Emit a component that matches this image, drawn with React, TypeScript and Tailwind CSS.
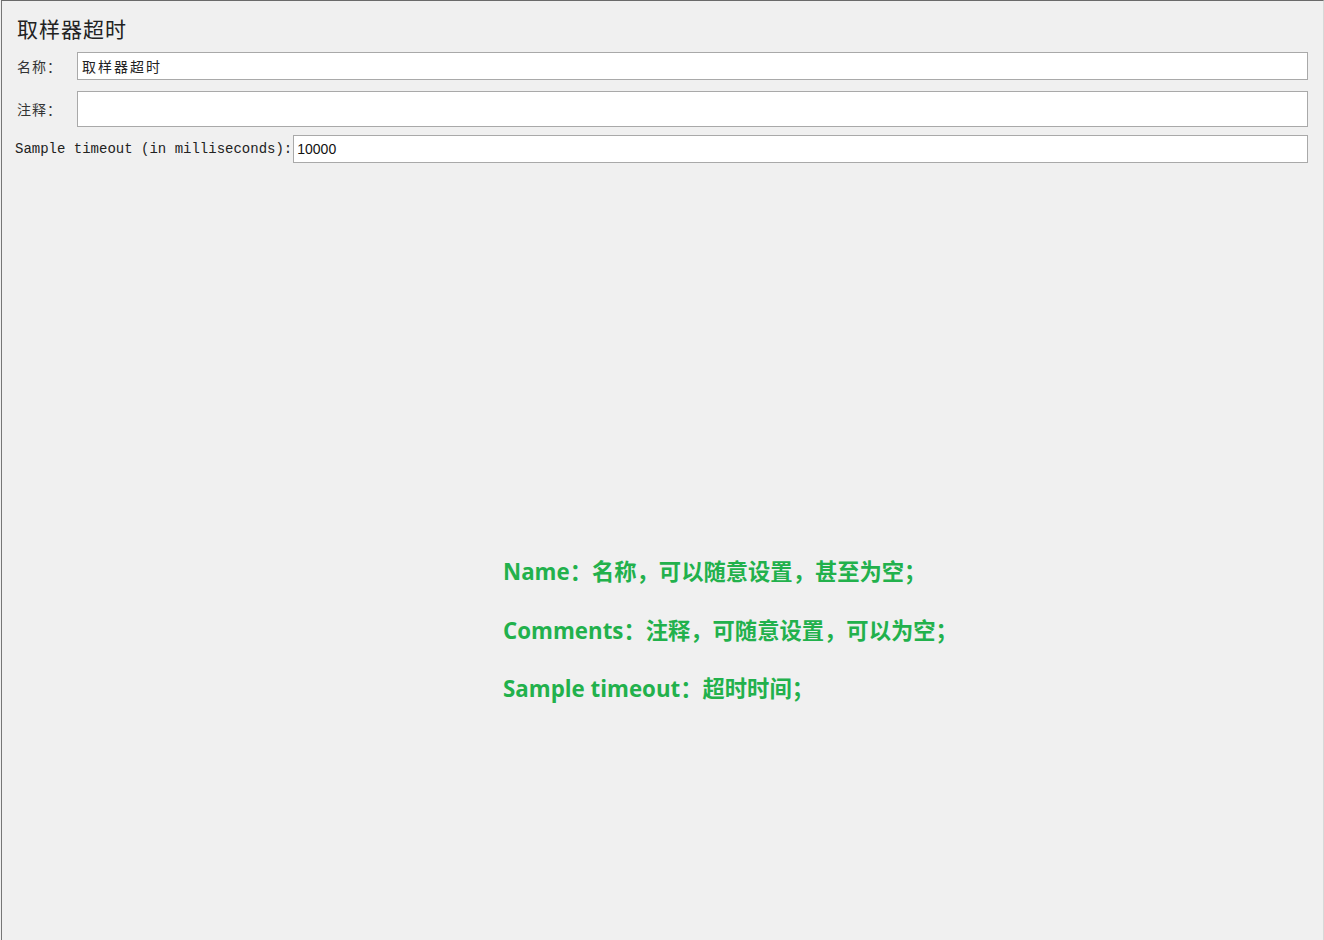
const cjk = { fontFamily: '"Noto Sans CJK SC", "Noto Sans", sans-serif' };

export default function App() {
  return (
    <div className="w-[1324px] h-[940px] bg-[#f0f0f0] pl-px overflow-hidden">
      <div className="h-full border-t border-l border-r border-t-[#6a6a6a] border-l-[#767676] border-r-[#d8d8d8] flex flex-col">
        <div className="pl-[15px] pr-[15px] pt-[15px]">
          <h1 className="text-[21px] leading-[24px] tracking-[1px] text-[#222]" style={cjk}>取样器超时</h1>

          <div className="flex items-center mt-[12px]">
            <label className="w-[60px] text-[14px] tracking-[1px] text-[#333]" style={cjk}>名称：</label>
            <input
              type="text"
              defaultValue="取样器超时"
              className="flex-1 h-[28px] bg-white border border-[#a9a9a9] px-1 text-[14px] tracking-[2px] text-[#222] outline-none"
              style={cjk}
            />
          </div>

          <div className="flex items-center mt-[11px]">
            <label className="w-[60px] text-[14px] tracking-[1px] text-[#333]" style={cjk}>注释：</label>
            <input
              type="text"
              className="flex-1 h-[36px] bg-white border border-[#a9a9a9] px-1 text-[14px] outline-none"
            />
          </div>

          <div className="flex items-center mt-[8px] -ml-[2px]">
            <label className="text-[14px] text-[#222] mr-px whitespace-pre" style={{ fontFamily: '"Liberation Mono", monospace' }}>
              Sample timeout (in milliseconds):
            </label>
            <input
              type="text"
              defaultValue="10000"
              className="flex-1 h-[28px] bg-white border border-[#a9a9a9] px-[3px] text-[14px] text-[#111] outline-none"
              style={{ fontFamily: '"Liberation Sans", Arial, sans-serif' }}
            />
          </div>
        </div>

        <div
          className="ml-[501px] mt-[380px] flex flex-col text-[22.3px] font-bold text-[#22b14c] leading-[58.5px]"
          style={{ fontFamily: '"Open Sans", "Noto Sans CJK SC", sans-serif' }}
        >
          <p>Name：名称，可以随意设置，甚至为空；</p>
          <p>Comments：注释，可随意设置，可以为空；</p>
          <p>Sample timeout：超时时间；</p>
        </div>
      </div>
    </div>
  );
}
